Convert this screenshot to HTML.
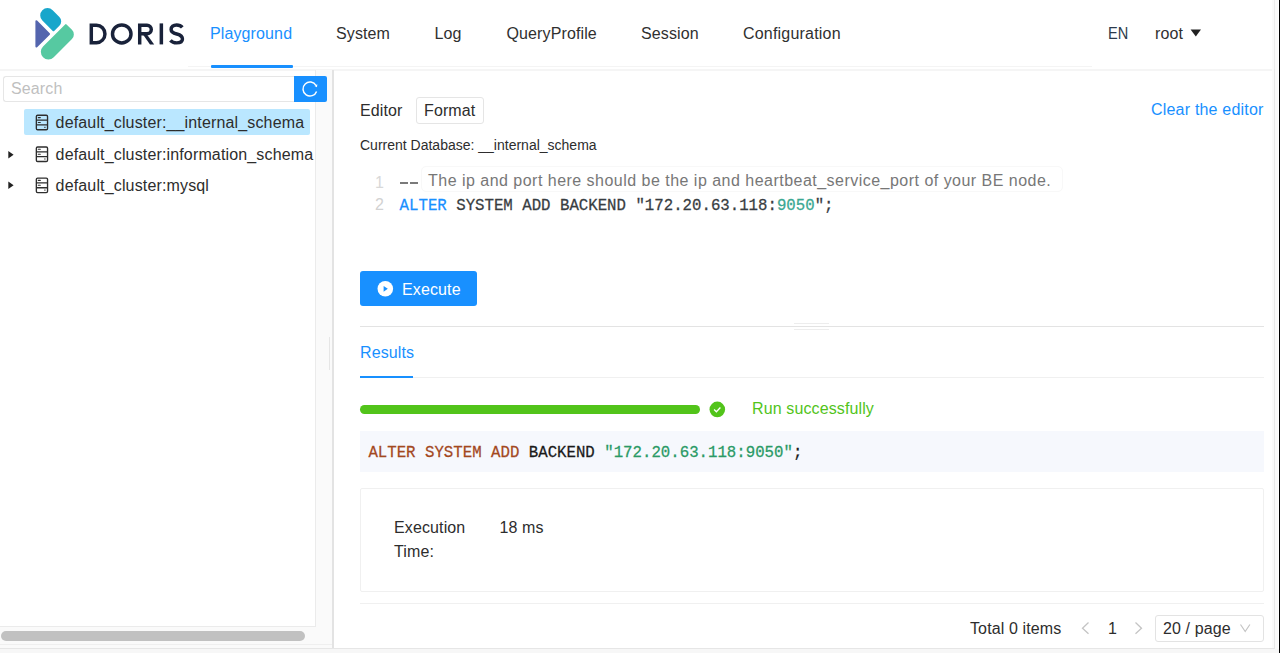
<!DOCTYPE html>
<html><head><meta charset="utf-8">
<style>
*{margin:0;padding:0;box-sizing:border-box}
html,body{width:1280px;height:653px;overflow:hidden;background:#fff;font-family:"Liberation Sans",sans-serif;color:#2d2d2d}
.a{position:absolute;white-space:nowrap}
.t16{font-size:16px;line-height:16px;letter-spacing:0.12px}
.mono{font-family:"Liberation Mono",monospace;font-size:15.72px;line-height:15.72px}
.nav{color:#303030}
</style></head><body>

<!-- header -->
<svg class="a" style="left:0;top:0" width="200" height="66" viewBox="0 0 200 66">
  <g transform="rotate(45)">
    <path d="M44.5,-30 H54 A6.2,6.2 0 0 1 60.2,-23.8 V-16.4 A1,1 0 0 1 59.2,-15.4 H44.5 A7.3,7.3 0 0 1 44.5,-30 Z" fill="#18a6cb"/>
    <path d="M64.3,-29.8 H71.95 A6.5,6.5 0 0 1 78.45,-23.3 V2.425 A7.575,7.575 0 0 1 63.3,2.425 V-28.8 A1,1 0 0 1 64.3,-29.8 Z" fill="#56c9a1"/>
  </g>
  <polygon points="36.4,21.31 36.4,46.59 49.04,33.95" fill="#5465ae" stroke="#5465ae" stroke-width="2" stroke-linejoin="round"/>
  <g fill="none" stroke="#19223a" stroke-width="3.45">
    <path d="M91.3,25.15 H96.5 A8.45,8.75 0 0 1 96.5,42.65 H91.3 Z"/>
    <ellipse cx="121.75" cy="33.95" rx="9.25" ry="9.05"/>
    <path d="M139.7,44.4 V25.15 H147 A4.3,4.25 0 0 1 147,33.65 H139.7"/>
    <path d="M182.3,27.3 C181,25.7 179,24.95 176.6,24.95 C173.4,24.95 171.1,26.8 171.1,29.4 C171.1,32.4 173.8,33.2 176.8,34 C180,34.8 182.45,36.1 182.45,39 C182.45,41.6 180,42.85 176.6,42.85 C174,42.85 171.8,41.9 170.4,40.3"/>
  </g>
  <g fill="#19223a">
    <polygon points="142.8,34.3 146.8,34.3 154.2,44.4 150,44.4"/>
    <rect x="159.6" y="23.4" width="3.5" height="21"/>
  </g>
</svg>

<div class="a" style="left:188px;top:66px;width:904px;height:1px;background:#f4f4f4"></div>
<div class="a" style="left:0;top:68.5px;width:1275px;height:2px;background:#f5f5f5"></div>
<div class="a" style="left:210.5px;top:65.3px;width:82px;height:2.3px;background:#1890ff;border-radius:1px"></div>

<div class="a t16" style="left:210px;top:26px;color:#1890ff">Playground</div>
<div class="a t16 nav" style="left:336px;top:26px">System</div>
<div class="a t16 nav" style="left:434.5px;top:26px">Log</div>
<div class="a t16 nav" style="left:506.5px;top:26px">QueryProfile</div>
<div class="a t16 nav" style="left:641px;top:26px">Session</div>
<div class="a t16 nav" style="left:743px;top:26px;letter-spacing:0.2px">Configuration</div>
<div class="a t16" style="left:1107.5px;top:26px;color:#2c3a4b;letter-spacing:0;transform:scaleX(0.91);transform-origin:0 0">EN</div>
<div class="a t16 nav" style="left:1155px;top:26px">root</div>
<svg class="a" style="left:1189px;top:28px" width="14" height="10"><path d="M1.6,1.5 H12 L6.8,8.6 Z" fill="#222"/></svg>

<!-- right edge -->
<div class="a" style="left:1272px;top:0;width:6px;height:653px;background:#fafafa"></div>
<div class="a" style="left:1274px;top:0;width:1px;height:653px;background:#e8e8e8"></div>
<div class="a" style="left:1279px;top:0;width:1px;height:653px;background:#000"></div>
<div class="a" style="left:1274px;top:0;width:1px;height:69px;background:#ececec"></div>

<!-- left panel -->
<div class="a" style="left:315px;top:70px;width:17px;height:578px;background:#fafafa"></div>
<div class="a" style="left:315px;top:70px;width:1px;height:556px;background:#ebebeb"></div>
<div class="a" style="left:332px;top:70px;width:1.5px;height:578px;background:#e3e3e3"></div>
<div class="a" style="left:329px;top:337px;width:1px;height:33px;background:#e6e6e6"></div>
<div class="a" style="left:0;top:626px;width:332px;height:22px;background:#fafafa"></div>
<div class="a" style="left:0;top:626px;width:316px;height:1px;background:#ebebeb"></div>
<div class="a" style="left:0;top:643.5px;width:332px;height:1px;background:#efefef"></div>
<div class="a" style="left:1px;top:630.5px;width:304px;height:10px;border-radius:5px;background:#c1c1c1"></div>
<div class="a" style="left:0;top:647.5px;width:1275px;height:1px;background:#e6e6e6"></div>
<div class="a" style="left:0;top:648.5px;width:1279px;height:5px;background:#f7f7f7"></div>

<div class="a" style="left:3px;top:75.5px;width:291.5px;height:26.5px;border:1px solid #e6e6e6;border-right:none;border-radius:3px 0 0 3px"></div>
<div class="a t16" style="left:11px;top:81px;color:#bfbfbf">Search</div>
<div class="a" style="left:294px;top:75.5px;width:32.5px;height:26.7px;background:#1890ff;border-radius:0 2px 2px 0"></div>
<svg class="a" style="left:300px;top:79px" width="20" height="20" viewBox="0 0 20 20">
  <path d="M16.06,6.5 A7,7 0 1 0 16.58,12.39" fill="none" stroke="#fff" stroke-width="1.45"/>
  <path d="M17.3,5.3 L17.0,8.3 L14.5,7.0 Z" fill="#fff"/>
</svg>

<div class="a" style="left:24px;top:109.4px;width:286px;height:26px;background:#bae7ff;border-radius:2px"></div>
<div class="a" style="left:0;top:0;width:315px;height:653px;overflow:hidden;pointer-events:none">
  <div class="a t16" style="left:55.6px;top:115px;letter-spacing:0.15px">default_cluster:__internal_schema</div>
  <div class="a t16" style="left:55.6px;top:147px;letter-spacing:0.15px">default_cluster:information_schema</div>
  <div class="a t16" style="left:55.6px;top:178px;letter-spacing:0.15px">default_cluster:mysql</div>
</div>
<svg class="a" style="left:0;top:100px" width="60" height="100" viewBox="0 100 60 100">
  <g id="dbi" fill="none" stroke="#2e2e2e" stroke-width="1.35">
    <rect x="36.35" y="115.25" width="11.2" height="14.5" rx="1.3"/>
    <path d="M36.35,120.1 H47.55 M36.35,124.9 H47.55"/>
    <path d="M38.3,117.6 H40.3 M38.3,122.5 H40.3" stroke-width="1.1" stroke-linecap="round"/>
    <path d="M44.6,127.3 H45.2" stroke-width="1" stroke-linecap="round"/>
  </g>
  <use href="#dbi" y="31.7"/>
  <use href="#dbi" y="62.8"/>
  <path d="M8.3,151 L13.6,154.7 L8.3,158.4 Z" fill="#222"/>
  <path d="M8.3,181.6 L13.6,185.3 L8.3,189 Z" fill="#222"/>
</svg>

<!-- editor -->
<div class="a t16" style="left:360px;top:103px">Editor</div>
<div class="a" style="left:415.5px;top:97px;width:68px;height:27px;border:1px solid #e5e5e5;border-radius:3px"></div>
<div class="a t16" style="left:424px;top:103px">Format</div>
<div class="a t16" style="left:1151px;top:102px;color:#1890ff;letter-spacing:0.2px">Clear the editor</div>
<div class="a" style="left:360px;top:138px;font-size:14px;line-height:14px">Current Database: __internal_schema</div>

<div class="a t16" style="left:375px;top:175px;color:#d8d8d8">1</div>
<div class="a t16" style="left:375px;top:197px;color:#d2d2d2">2</div>
<div class="a" style="left:399.6px;top:182px;width:8.4px;height:1.8px;background:#7a7a7a"></div><div class="a" style="left:409.5px;top:182px;width:8.4px;height:1.8px;background:#7a7a7a"></div>
<div class="a" style="left:421px;top:166px;width:642px;height:25.5px;border:1px solid #f8f8f8;border-radius:5px"></div>
<div class="a t16" style="left:428px;top:173px;color:#777;letter-spacing:0.48px">The ip and port here should be the ip and heartbeat_service_port of your BE node.</div>
<div class="a mono" style="left:399.6px;top:199px;color:#383d42;transform:scaleY(1.09);transform-origin:0 11px;-webkit-text-stroke:0.25px"><span style="color:#1890ff">ALTER</span> SYSTEM ADD BACKEND "172.20.63.118:<span style="color:#3aa892">9050</span>";</div>

<div class="a" style="left:360px;top:271px;width:117px;height:35px;background:#1890ff;border-radius:3px"></div>
<svg class="a" style="left:376px;top:280.2px" width="18" height="18" viewBox="0 0 18 18">
  <circle cx="9.3" cy="8.8" r="7.8" fill="#fff"/>
  <path d="M7.6,5.9 L11.8,8.8 L7.6,11.7 Z" fill="#1890ff"/>
</svg>
<div class="a t16" style="left:402px;top:282px;color:#fff">Execute</div>

<!-- splitter -->
<div class="a" style="left:360px;top:325.5px;width:904px;height:1.5px;background:#e3e3e3"></div>
<div class="a" style="left:794px;top:322.5px;width:35px;height:1px;background:#ededed"></div>
<div class="a" style="left:794px;top:329px;width:35px;height:1px;background:#ededed"></div>

<!-- results -->
<div class="a t16" style="left:360px;top:345px;color:#1890ff">Results</div>
<div class="a" style="left:360px;top:377px;width:904px;height:1px;background:#f0f0f0"></div>
<div class="a" style="left:360px;top:375.5px;width:53px;height:2.5px;background:#1890ff"></div>

<div class="a" style="left:360px;top:405.2px;width:340px;height:8.8px;border-radius:4.4px;background:#52c41a"></div>
<svg class="a" style="left:708px;top:400px" width="19" height="19" viewBox="0 0 19 19">
  <circle cx="9.3" cy="9.4" r="7.8" fill="#52c41a"/>
  <path d="M6.1,9.5 L8.4,11.8 L12.4,7.5" fill="none" stroke="#fff" stroke-width="1.3"/>
</svg>
<div class="a t16" style="left:752px;top:401px;color:#52c41a">Run successfully</div>

<div class="a" style="left:360px;top:431px;width:904px;height:41px;background:#f6f8fd"></div>
<div class="a mono" style="left:368.4px;top:446px;color:#1a1a1a;transform:scaleY(1.09);transform-origin:0 11px;-webkit-text-stroke:0.25px"><span style="color:#a3481f">ALTER SYSTEM ADD</span> BACKEND <span style="color:#2a9a66">"172.20.63.118:9050"</span>;</div>

<div class="a" style="left:360px;top:488px;width:903.5px;height:104px;border:1px solid #f0f0f0;border-radius:2px"></div>
<div class="a t16" style="left:394px;top:520px">Execution</div>
<div class="a t16" style="left:394px;top:544px">Time:</div>
<div class="a t16" style="left:499.5px;top:520px">18 ms</div>
<div class="a" style="left:360px;top:602.5px;width:904px;height:1px;background:#f0f0f0"></div>

<!-- pagination -->
<div class="a t16" style="left:970px;top:621px">Total 0 items</div>
<svg class="a" style="left:1078px;top:620px" width="14" height="16"><path d="M10.5,2.5 L4.5,8.2 L10.5,13.8" fill="none" stroke="#c4c4c4" stroke-width="1.3"/></svg>
<div class="a t16" style="left:1108px;top:621px">1</div>
<svg class="a" style="left:1132px;top:620px" width="14" height="16"><path d="M3.5,2.5 L9.5,8.2 L3.5,13.8" fill="none" stroke="#c4c4c4" stroke-width="1.3"/></svg>
<div class="a" style="left:1154.5px;top:615px;width:109px;height:27px;border:1px solid #e3e3e3;border-radius:3px"></div>
<div class="a t16" style="left:1163px;top:621px">20 / page</div>
<svg class="a" style="left:1239px;top:622px" width="13" height="12"><path d="M1.5,2.5 L6.2,9.5 L10.9,2.5" fill="none" stroke="#c4c4c4" stroke-width="1.2"/></svg>

</body></html>
